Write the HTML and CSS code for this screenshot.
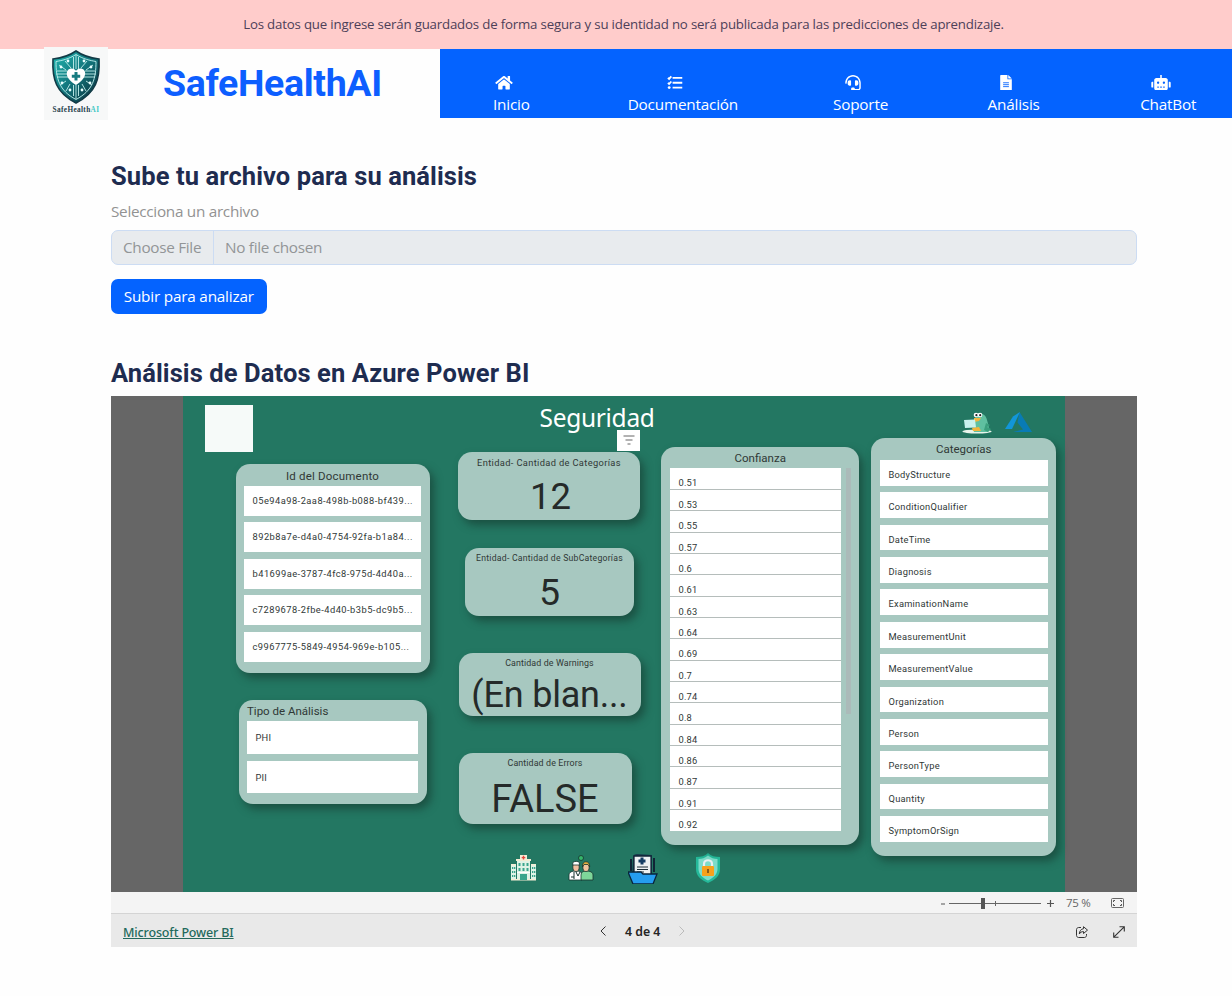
FILE: index.html
```html
<!DOCTYPE html>
<html lang="es">
<head>
<meta charset="utf-8">
<title>SafeHealthAI</title>
<link rel="stylesheet" href="styles.css">
</head>
<body>
<div class="notice">Los datos que ingrese serán guardados de forma segura y su identidad no será publicada para las predicciones de aprendizaje.</div>
<header class="header">
  <div class="logo">
    <svg width="50" height="54" viewBox="0 0 50 54">
      <defs><linearGradient id="lg" x1="0" y1="0" x2="1" y2="1"><stop offset="0" stop-color="#20b9b2"/><stop offset=".5" stop-color="#12757c"/><stop offset="1" stop-color="#0a2733"/></linearGradient></defs>
      <path d="M25 1C18 6 10 8 2 9c-1 20 3 34 23 44C45 43 49 29 48 9 40 8 32 6 25 1Z" fill="url(#lg)" stroke="#123b46" stroke-width="1.6"/>
      <path d="M25 4.500C18 9 11 10.500 5 11.500c0 17 3 29 20 38 17-9 20-21 20-38C39 10.500 32 9 25 4.500Z" fill="none" stroke="#bff0ee" stroke-width=".9"/>
      <g stroke="#c3efec" stroke-width=".9" fill="none"><path d="M25 5v14M22.500 7v12M27.500 7v12M25 35v14M22.500 35v11M27.500 35v11M5 24h12M6 27h11M6 21h10M45 24H33M44 27H33M44 21H34M20 18l-6-7M15 20l-7-5M30 18l6-7M35 20l7-5M19 34l-4 7M15 31l-6 4M31 34l4 7M35 31l6 4"/></g>
      <g fill="#e8ffff"><circle cx="17" cy="11" r="1.400"/><circle cx="10" cy="17" r="1.400"/><circle cx="33" cy="11" r="1.400"/><circle cx="40" cy="17" r="1.400"/><circle cx="19" cy="40" r="1.400"/><circle cx="11" cy="33" r="1.400"/><circle cx="31" cy="40" r="1.400"/><circle cx="39" cy="33" r="1.400"/></g>
      <path d="M25 35C12 27 15 18.500 20.500 18.500c2.200 0 3.700 1 4.500 2.300.8-1.300 2.300-2.300 4.500-2.300C35 18.500 38 27 25 35Z" fill="#fff"/>
      <path d="M25 22v8.500M20.800 26.200h8.400" stroke="#167b80" stroke-width="3"/>
    </svg>
    <div class="logo-text">SafeHealth<span>AI</span></div>
  </div>
  <div class="brand">SafeHealthAI</div>
  <nav class="nav">
    <a class="nav-item"><svg class="nav-icon" width="18" height="16" viewBox="0 0 576 512"><path d="M280 148 96 300v164c0 9 7 16 16 16h112c9 0 16-7 16-16v-96c0-9 7-16 16-16h64c9 0 16 7 16 16v96c0 9 7 16 16 16h112c9 0 16-7 16-16V300L296 148c-5-4-11-4-16 0ZM572 251l-84-69V44c0-7-5-12-12-12h-56c-7 0-12 5-12 12v73l-89-74c-18-15-43-15-61 0L4 251c-5 4-6 12-2 17l26 31c4 5 12 6 17 2L280 107c5-4 11-4 16 0l235 194c5 4 13 3 17-2l26-31c4-5 3-13-2-17Z"/></svg><span>Inicio</span></a>
    <a class="nav-item"><svg class="nav-icon" width="16" height="16" viewBox="0 0 16 16"><path d="M5.500 3h10M5.500 8h10M5.500 13h10M.7 3l1.200 1.100 2.300-2.600M.7 8.200l1.200 1.100 2.300-2.600" fill="none" stroke="#fff" stroke-width="1.900"/><circle cx="2" cy="13" r="1.500"/></svg><span>Documentación</span></a>
    <a class="nav-item"><svg class="nav-icon" width="16" height="16" viewBox="0 0 512 512"><path d="M192 208c0-18-14-32-32-32h-16c-35 0-64 29-64 64v48c0 35 29 64 64 64h16c18 0 32-14 32-32V208Zm176 144c35 0 64-29 64-64v-48c0-35-29-64-64-64h-16c-18 0-32 14-32 32v112c0 18 14 32 32 32h16ZM256 0C113 0 4 119 0 256v16c0 9 7 16 16 16h16c9 0 16-7 16-16v-16a208 208 0 0 1 416 0v166c0 23-19 42-42 42H320c0-26-22-48-48-48h-32a48 48 0 0 0 0 96h182c50 0 90-40 90-90V256C508 119 399 0 256 0Z"/></svg><span>Soporte</span></a>
    <a class="nav-item"><svg class="nav-icon" width="12" height="16" viewBox="0 0 12 16"><path d="M.7 0H7.500v4.300h4.500V15.300c0 .4-.3.700-.7.700H.7c-.4 0-.7-.3-.7-.7V.7C0 .3.300 0 .7 0Z"/><path d="M8.300 0 12 3.700H8.300Z"/><path d="M3 8h6M3 10h6M3 12h6" stroke="#0463ff" stroke-width=".9"/></svg><span>Análisis</span></a>
    <a class="nav-item"><svg class="nav-icon" width="20" height="16" viewBox="0 0 20 16"><path d="M9.200 0h1.600v3h4c1.300 0 2.200 1 2.200 2.200v8.600c0 1.200-1 2.200-2.200 2.200H5.200C4 16 3 15 3 13.800V5.200C3 4 4 3 5.200 3h4ZM0 8c0-.6.400-1 1-1h1v6H1c-.6 0-1-.4-1-1Zm18-1h1c.6 0 1 .4 1 1v4c0 .6-.4 1-1 1h-1Z"/><path d="M6 12.500h2M9 12.500h2M12 12.500h2" stroke="#0463ff" stroke-width="1"/><circle cx="7" cy="8" r="1.200" fill="#0463ff"/><circle cx="13" cy="8" r="1.200" fill="#0463ff"/></svg><span>ChatBot</span></a>
  </nav>
</header>
<main class="main">
  <h2 class="heading">Sube tu archivo para su análisis</h2>
  <div class="label">Selecciona un archivo</div>
  <div class="file"><span class="file-button">Choose File</span><span class="file-name">No file chosen</span></div>
  <button class="submit">Subir para analizar</button>
  <h2 class="heading heading-report">Análisis de Datos en Azure Power BI</h2>
  <section class="report">
    <div class="canvas">
      <div class="col col-docs">
        <div class="blank"></div>
        <div class="card docs">
          <div class="card-title">Id del Documento</div>
          <div class="row">05e94a98-2aa8-498b-b088-bf439...</div>
          <div class="row">892b8a7e-d4a0-4754-92fa-b1a84...</div>
          <div class="row">b41699ae-3787-4fc8-975d-4d40a...</div>
          <div class="row">c7289678-2fbe-4d40-b3b5-dc9b5...</div>
          <div class="row">c9967775-5849-4954-969e-b105...</div>
        </div>
        <div class="card types">
          <div class="card-title">Tipo de Análisis</div>
          <div class="row">PHI</div>
          <div class="row">PII</div>
        </div>
      </div>
      <div class="col col-kpi">
        <div class="title">Seguridad</div>
        <div class="card kpi kpi-cat">
          <div class="filter"><svg width="12" height="10" viewBox="0 0 12 10"><path d="M.5 1h11M2.500 5h7M4.500 9h3" stroke="#666" stroke-width="1"/></svg></div>
          <div class="kpi-label">Entidad- Cantidad de Categorías</div><div class="kpi-value">12</div>
        </div>
        <div class="card kpi kpi-sub"><div class="kpi-label">Entidad- Cantidad de SubCategorías</div><div class="kpi-value">5</div></div>
        <div class="card kpi kpi-warn"><div class="kpi-label">Cantidad de Warnings</div><div class="kpi-value">(En blan...</div></div>
        <div class="card kpi kpi-err"><div class="kpi-label">Cantidad de Errors</div><div class="kpi-value">FALSE</div></div>
        <div class="pages">
          <svg width="25" height="26" viewBox="0 0 25 26"><path d="M6 4h13v21H6ZM0 9h5v16H0Zm20 0h5v16h-5Z" fill="#dff3e6"/><path d="M5 4h15v2H5ZM9 0h7v5H9ZM0 9h5v1.500H0Zm20 0h5v1.500h-5ZM0 24h25v1.500H0Z" fill="#f3ecd4"/><path d="M12.500.8v3.600M10.700 2.600h3.600" stroke="#e3443c" stroke-width="1.400"/><path d="M7.500 8h2v3h-2zm4 0h2v3h-2zm4 0h2v3h-2zm-8 5h2v3h-2zm4 0h2v3h-2zm4 0h2v3h-2zM1 12h1.300v2H1zm2 0h1.300v2H3zm-2 4h1.300v2H1zm2 0h1.300v2H3zm-2 4h1.300v2H1zm2 0h1.300v2H3zm18-8h1.300v2H21zm2 0h1.300v2H23zm-2 4h1.300v2H21zm2 0h1.300v2H23zm-2 4h1.300v2H21zm2 0h1.300v2H23zM9 19h7v6H9z" fill="#3aa58c"/><path d="M6 17.500h13" stroke="#fff"/></svg>
          <svg width="26" height="26" viewBox="0 0 26 26"><g stroke="#17332e" stroke-width=".8"><circle cx="13" cy="3" r="2.500" fill="#36b66b"/><path d="M1 25v-5c0-3 3-4 7-4s6 1 6 4v5Z" fill="#fff"/><path d="M13 25v-5c0-3 2-4 5-4 4 0 7 1 7 4v5Z" fill="#7ed69a"/><ellipse cx="8" cy="12" rx="3.200" ry="4.500" fill="#f3bfa0"/><ellipse cx="18" cy="12" rx="3.200" ry="4.500" fill="#f3c49d"/><path d="M4.800 10V7.500c2-1.500 5-1.500 6.600 0V10Z" fill="#fff"/><path d="M14.500 12c-1-7 8-7 7.200 0l-1.700-2.500h-4Z" fill="#e4ae3e"/></g><path d="M8 17l2 4 2-4M6 17v7M3 22h3" stroke="#17332e" fill="none"/></svg>
          <svg width="30" height="30" viewBox="0 0 30 30"><path d="M5 3c0-2 2-3 4-3l15 1v20H4Z" fill="#183b4d"/><path d="M6 2h17v21H6Z" fill="#edf1f2" stroke="#102536" stroke-width="1.300"/><path d="M14 3.500v7M10.500 7h7" stroke="#153d63" stroke-width="3"/><path d="M9 13h11M9 15.500h11M9 18h7" stroke="#1c2d37"/><path d="M3 5v12M26 4v14" stroke="#102536" stroke-width="2"/><path d="M0 18h13l2 2h14l-4 10H5Z" fill="#259df0" stroke="#09243b" stroke-width="1.300"/></svg>
          <svg width="24" height="30" viewBox="0 0 24 30"><path d="M12 0c3 3 7 4 12 4v12c0 7-5 11-12 14C5 27 0 23 0 16V4c5 0 9-1 12-4Z" fill="#25b99a"/><path d="M12 2.500c3 2.500 6 3.500 9.500 3.500v10c0 5-4 9-9.500 11.500C6.500 25 2.500 21 2.500 16V6C6 6 9 5 12 2.500Z" fill="#7cdcc9"/><path d="M8 14v-3c0-5 8-5 8 0v3" fill="none" stroke="#e9eff0" stroke-width="2.200"/><rect x="6" y="13" width="12" height="10" rx="1" fill="#f7a11c"/><path d="M12 16v4" stroke="#8b5a17" stroke-width="2"/></svg>
        </div>
      </div>
      <div class="card conf">
        <div class="card-title">Confianza</div>
        <div class="conf-body">
          <div class="conf-list">
            <div>0.51</div><div>0.53</div><div>0.55</div><div>0.57</div><div>0.6</div><div>0.61</div><div>0.63</div><div>0.64</div><div>0.69</div><div>0.7</div><div>0.74</div><div>0.8</div><div>0.84</div><div>0.86</div><div>0.87</div><div>0.91</div><div>0.92</div>
          </div>
          <div class="scroll"></div>
        </div>
      </div>
      <div class="col col-cats">
        <div class="badges">
          <svg width="30" height="22" viewBox="0 0 30 22"><ellipse cx="15" cy="19.500" rx="14.500" ry="2" fill="#e8f5ec"/><path d="M12 20c-2-5 1-7 1-10 0-6 1-9 4-9s7 2 8 7c1 4 3 8 1 12Z" fill="#5fc0a0"/><path d="M24 11l4 2-3 2 4 2-3 3-4-2Z" fill="#3a9f7d"/><circle cx="14" cy="3" r="2.300" fill="#fff"/><circle cx="18" cy="3" r="2.300" fill="#fff"/><circle cx="14.400" cy="3.200" r="1.100" fill="#222"/><circle cx="18.200" cy="3.200" r="1.100" fill="#222"/><path d="M12 6h7l-2 3-5 1Z" fill="#f1b53c"/><path d="M2 8l11-.5 1 8L3 16Z" fill="#c9f1ee"/><path d="M10 16l7-1 2 4h-8Z" fill="#f1b53c"/></svg>
          <svg width="27" height="20" viewBox="0 0 27 20"><path d="M14.500 0 27 20H8l10-2.500-5.500-7Z" fill="#087bb5"/><path d="M15 0 8 4.500 0 17h7Z" fill="#1296d8"/></svg>
        </div>
        <div class="card cats">
          <div class="card-title">Categorías</div>
          <div class="row">BodyStructure</div><div class="row">ConditionQualifier</div><div class="row">DateTime</div><div class="row">Diagnosis</div><div class="row">ExaminationName</div><div class="row">MeasurementUnit</div><div class="row">MeasurementValue</div><div class="row">Organization</div><div class="row">Person</div><div class="row">PersonType</div><div class="row">Quantity</div><div class="row">SymptomOrSign</div>
        </div>
      </div>
    </div>
    <div class="zoombar">
      <svg width="114" height="14" viewBox="0 0 114 14"><path d="M1 8h4M107 7.500h7M110.500 4v7" stroke="#555" stroke-width="1.200"/><path d="M9 7.500h92M55.500 5v5" stroke="#666"/><rect x="41" y="2" width="4" height="11" fill="#555"/></svg>
      <span class="zoom-value">75 %</span>
      <svg width="13" height="10" viewBox="0 0 13 10"><rect x=".5" y=".5" width="12" height="9" rx="1" fill="none" stroke="#666"/><path d="M2.500 4V2.500H4M9 2.500h1.500V4M10.500 6v1.500H9M4 7.500H2.500V6" fill="none" stroke="#555"/></svg>
    </div>
    <div class="footer">
      <a class="pbi">Microsoft Power BI</a>
      <div class="pager"><svg width="6" height="10" viewBox="0 0 6 10"><path d="M5.500.5 1 5l4.500 4.500" fill="none" stroke="#333"/></svg><span>4 de 4</span><svg width="6" height="10" viewBox="0 0 6 10"><path d="M.5.500 5 5 .5 9.500" fill="none" stroke="#bbb"/></svg></div>
      <div class="actions">
        <svg width="12" height="12" viewBox="0 0 12 12"><path d="M5 1.500H2.500c-1 0-2 1-2 2v6c0 1 1 2 2 2h6c1 0 2-1 2-2V8M7.500.7l4 3.400-4 3.400V5.600C5.500 5.600 4.300 6.300 3.300 8c.2-3 1.700-5 4.200-5.300Z" fill="none" stroke="#333"/></svg>
        <svg width="12" height="12" viewBox="0 0 12 12"><path d="M.8 11.200 11.200.8M6.500.7h4.800v4.800M.7 6.500v4.800h4.800" fill="none" stroke="#333" stroke-width="1.100"/></svg>
      </div>
    </div>
  </section>
</main>
</body>
</html>
```
FILE: styles.css
```css
* { box-sizing: border-box; }
body { margin: 0; background: #fefefe; font-family: "Open Sans", sans-serif; height: 996px; overflow: hidden; }
svg { display: block; flex: none; }
.notice { height: 48.500px; background: #ffcccb; color: #4d4058; font-size: 13.250px; letter-spacing: -.180px; line-height: 49px; text-align: center; padding-left: 15px; white-space: nowrap; }
.header { display: flex; height: 69.500px; padding-left: 44px; }
.logo { position: relative; width: 64px; height: 73px; margin-top: -1.500px; background: #f7f8f8; display: flex; flex-direction: column; align-items: center; padding-top: 3px; }
.logo-text { font: bold 7.300px/9px "Liberation Serif", serif; color: #24404a; letter-spacing: .350px; margin-top: 1px; }
.logo-text span { color: #45c9c6; }
.brand { width: 332px; padding-left: 55px; font: bold 37.500px/69px Roboto, sans-serif; letter-spacing: -.350px; color: #0d5eff; }
.nav { flex: 1; background: #0463ff; display: flex; gap: 98px; padding: 26px 0 0 53px; color: #fff; font-size: 15.300px; letter-spacing: -.200px; font-weight: 500; }
.nav-item { display: flex; flex-direction: column; align-items: center; line-height: 20px; white-space: nowrap; }
.nav-item:nth-child(3) { margin-left: -3px; }
.nav-item:nth-child(4) { margin-left: 1.500px; }
.nav-item:nth-child(5) { margin-left: 2.500px; }
.nav-icon { fill: #fff; margin: 0 15px 3.500px 0; height: 15.500px; }
.main { width: 1025.500px; margin-left: 111px; padding-top: 42.200px; }
.heading { margin: 0; font: bold 25.500px/33px Roboto, sans-serif; letter-spacing: .1px; color: #1e2c50; }
.label { font-size: 15.300px; letter-spacing: -.290px; line-height: 20px; color: #929292; margin: 7.800px 0 8.800px; }
.file { display: flex; height: 35px; border: 1px solid #ccdcf3; border-radius: 7px; background: #e8ebee; color: #929597; font-size: 15.300px; letter-spacing: -.300px; line-height: 32.500px; }
.file-button { width: 102px; padding-left: 11px; border-right: 1px solid #ccdcf3; }
.file-name { padding-left: 11px; }
.submit { display: block; margin: 14.200px 0 0; width: 155.500px; height: 35px; padding: 0; border: 0; border-radius: 7px; background: #0463ff; color: #fff; font: 500 15.300px/35px "Open Sans", sans-serif; letter-spacing: -.200px; }
.heading-report { margin-top: 43px; }
.report { margin-top: 6px; }
.canvas { height: 496px; border: solid #666; border-width: 0 72px; background: #237762; display: flex; padding-left: 22px; color: #303836; font-family: Roboto, sans-serif; }
.col { display: flex; flex-direction: column; }
.card { background: #a7c8c0; border-radius: 14px; box-shadow: 4px 5px 9px rgba(20, 50, 40, .55); }
.card-title { font-size: 11.500px; letter-spacing: .200px; text-align: center; line-height: 14px; }
.row { background: #fff; font-size: 9.300px; letter-spacing: .200px; padding-left: 8.500px; white-space: nowrap; }
.col-docs { width: 253px; }
.blank { width: 47.500px; height: 47.500px; margin-top: 9px; background: #f6faf9; }
.docs { width: 194px; height: 209px; margin: 11.500px 0 0 30.500px; padding: 5px 8.500px 0; }
.docs .card-title { margin-bottom: 3px; }
.docs .row { height: 29.700px; margin-bottom: 6.800px; line-height: 30px; letter-spacing: .470px; }
.types { width: 188.500px; height: 104px; margin: 27px 0 0 33.500px; padding: 4.500px 9px 0 8.500px; }
.types .card-title { text-align: left; margin-bottom: 3px; letter-spacing: 0; }
.types .row { height: 32.500px; margin-bottom: 7px; line-height: 34px; }
.col-kpi { width: 203px; }
.title { height: 56px; padding-left: 81.500px; font: 24.500px/43px "Noto Sans", sans-serif; letter-spacing: -.300px; color: #fff; }
.kpi { position: relative; text-align: center; padding-top: 4px; }
.kpi-label { font-size: 9.300px; letter-spacing: .350px; line-height: 13px; white-space: nowrap; }
.kpi-value { font-size: 37.500px; line-height: 54px; color: #252a29; white-space: nowrap; }
.kpi-cat { width: 182px; height: 68px; }
.kpi-cat .kpi-value { font-size: 36.500px; padding-left: 3px; line-height: 56px; }
.kpi-sub { width: 169px; height: 68px; margin: 28.500px 0 0 7px; }
.kpi-sub .kpi-label { font-size: 8.700px; letter-spacing: .230px; }
.kpi-warn { width: 182px; height: 63px; margin: 37px 0 0 .5px; }
.kpi-warn .kpi-label, .kpi-err .kpi-label { font-size: 8.900px; letter-spacing: .1px; }
.kpi-warn .kpi-value { font-size: 36px; letter-spacing: -.200px; line-height: 50px; }
.kpi-err { width: 173px; height: 71px; margin: 36.500px 0 0 .5px; }
.kpi-err .kpi-value { line-height: 58px; font-size: 38px; }
.filter { position: absolute; right: 0; top: -22px; width: 23px; height: 21px; background: #fff; display: flex; align-items: center; justify-content: center; }
.pages { display: flex; width: 210px; margin: 29px 0 0 53px; align-items: center; }
.pages svg:nth-child(2) { margin-left: 32px; }
.pages svg:nth-child(3) { margin: 1px 0 0 34px; }
.pages svg:nth-child(4) { margin-left: 38px; }
.conf { width: 197.500px; height: 398.500px; margin: 51px 12.500px 0 0; padding: 4px 0 0 9px; }
.conf .card-title { margin-bottom: 3.500px; padding-right: 8px; }
.conf .card-title, .cats .card-title { letter-spacing: 0; }
.conf-body { display: flex; gap: 4.500px; }
.conf-list { width: 171px; font-size: 9.300px; letter-spacing: .2px; }
.conf-list div { height: 21.350px; padding: 8px 0 0 8.500px; line-height: 14px; background: #fff; border-bottom: 1px solid #b5bdbb; }
.conf-list div:last-child { border: 0; }
.scroll { width: 5px; height: 246px; background: #abbab9; }
.col-cats { width: 185px; }
.badges { display: flex; gap: 13px; height: 42.500px; padding: 16px 0 0 91px; }
.cats { height: 418px; padding: 4px 8.500px 0 9px; }
.cats .card-title { margin-bottom: 3.500px; }
.cats .row { height: 25.700px; margin-bottom: 6.700px; line-height: 29px; letter-spacing: .250px; }
.zoombar { height: 22px; background: #f4f4f4; border-bottom: 1px solid #d4d4d4; display: flex; align-items: center; justify-content: flex-end; padding: 1px 12.500px 0 0; color: #666; font: 11.500px/20px "Open Sans", sans-serif; }
.zoom-value { width: 24px; margin: 0 21px 0 12px; white-space: nowrap; letter-spacing: -.3px; }
.footer { height: 33px; background: #e9e9e9; display: flex; align-items: center; justify-content: space-between; padding: 0 12px; font-family: "Noto Sans", sans-serif; font-size: 12.500px; }
.pbi { width: 477px; color: #23695c; text-decoration: underline; font-weight: 500; letter-spacing: -.150px; padding-top: 4px; }
.pager { flex: 1; display: flex; align-items: center; gap: 19px; font-size: 12.300px; font-weight: 600; color: #252525; padding-top: 2px; }
.actions { display: flex; gap: 25px; padding-top: 3px; }
```
